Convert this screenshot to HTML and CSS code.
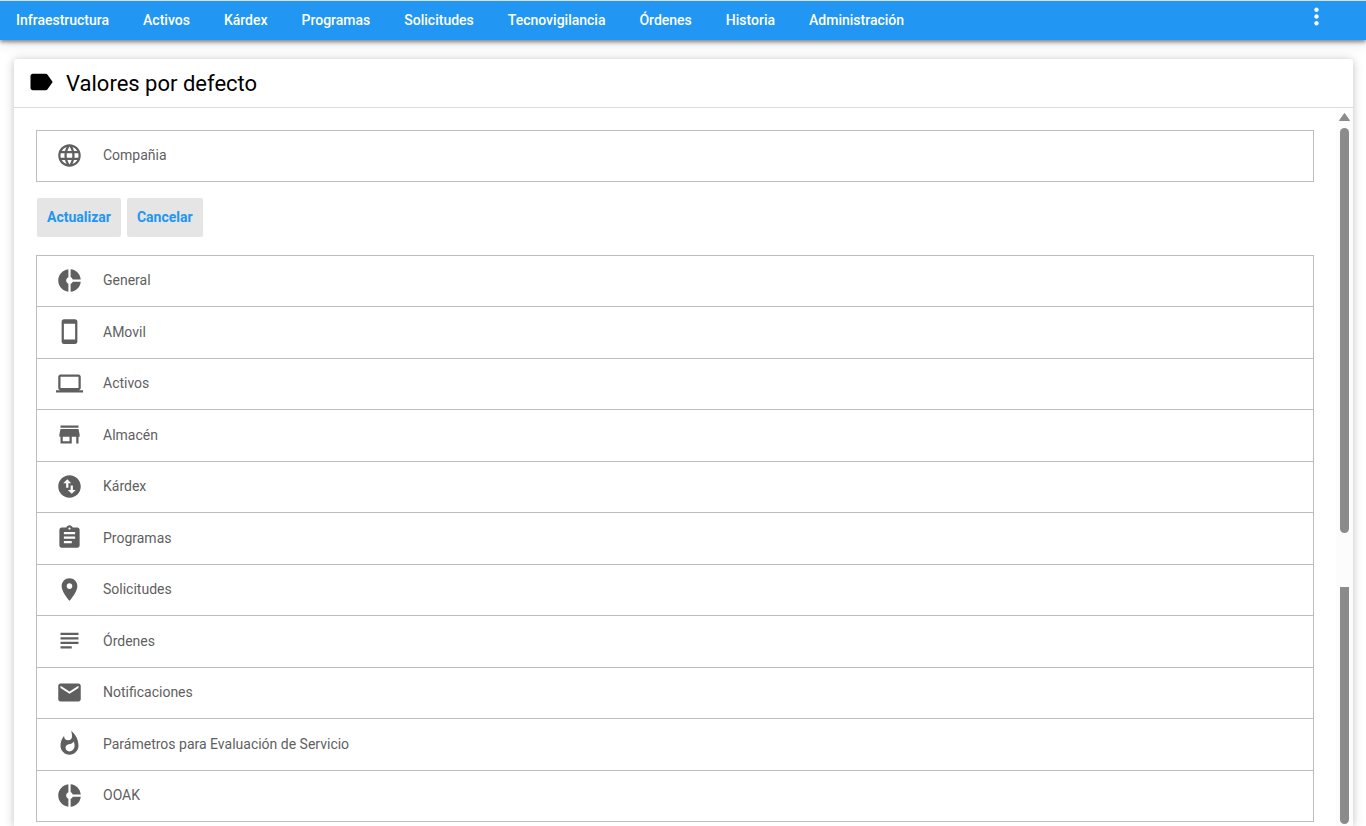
FILE: index.html
```html
<!DOCTYPE html>
<html lang="es">
<head>
  <meta charset="UTF-8" />
  <meta name="viewport" content="width=device-width, initial-scale=1" />
  <title>Valores por defecto</title>
  <link rel="stylesheet" href="styles.css">
</head>
<body>
  <header class="topbar">
    <nav class="menu">
      <a href="#">Infraestructura</a>
      <a href="#">Activos</a>
      <a href="#">Kárdex</a>
      <a href="#">Programas</a>
      <a href="#">Solicitudes</a>
      <a href="#">Tecnovigilancia</a>
      <a href="#">Órdenes</a>
      <a href="#">Historia</a>
      <a href="#">Administración</a>
    </nav>
    <button class="more" type="button" aria-label="Más opciones">
      <svg class="icon" viewBox="0 0 24 24"><path d="M12 8c1.1 0 2-.9 2-2s-.9-2-2-2-2 .9-2 2 .9 2 2 2zm0 2c-1.100 0-2 .9-2 2s.9 2 2 2 2-.9 2-2-.9-2-2-2zm0 6c-1.100 0-2 .9-2 2s.9 2 2 2 2-.9 2-2-.9-2-2-2z"/></svg>
    </button>
  </header>

  <main class="card">
    <div class="card-header">
      <svg class="icon" viewBox="0 0 24 24"><path d="M17.630 5.840C17.270 5.330 16.670 5 16 5L5 5.010C3.900 5.010 3 5.900 3 7v10c0 1.100.9 1.990 2 1.990L16 19c.67 0 1.270-.33 1.630-.84L22 12l-4.370-6.160z"/></svg>
      <h1>Valores por defecto</h1>
    </div>

    <div class="card-body">
      <div class="content">
        <!-- Company -->
        <ul class="panels">
          <li>
            <button class="panel" type="button">
              <svg class="icon" viewBox="0 0 24 24"><path d="M11.990 2C6.470 2 2 6.480 2 12s4.470 10 9.990 10C17.520 22 22 17.520 22 12S17.520 2 11.990 2zm6.930 6h-2.950c-.32-1.250-.78-2.450-1.380-3.560 1.840.63 3.370 1.910 4.330 3.560zM12 4.040c.83 1.200 1.480 2.530 1.910 3.960h-3.820c.43-1.430 1.080-2.760 1.910-3.960zM4.260 14C4.100 13.360 4 12.690 4 12s.1-1.360.26-2h3.380c-.08.66-.14 1.320-.14 2s.06 1.340.14 2H4.260zm.82 2h2.950c.32 1.250.78 2.450 1.380 3.560-1.840-.63-3.370-1.900-4.330-3.560zm2.950-8H5.080c.96-1.660 2.490-2.930 4.330-3.560C8.810 5.550 8.350 6.750 8.030 8zM12 19.960c-.83-1.200-1.480-2.530-1.910-3.960h3.820c-.43 1.430-1.080 2.760-1.910 3.960zM14.340 14H9.660c-.09-.66-.16-1.320-.16-2s.07-1.350.16-2h4.680c.09.65.16 1.320.16 2s-.07 1.340-.16 2zm.25 5.560c.6-1.110 1.060-2.310 1.380-3.560h2.950c-.96 1.650-2.490 2.930-4.330 3.560zM16.360 14c.08-.66.14-1.320.14-2s-.06-1.340-.14-2h3.380c.16.64.26 1.310.26 2s-.1 1.360-.26 2h-3.380z"/></svg>
              Compañia
            </button>
          </li>
        </ul>

        <div class="actions">
          <button class="btn" type="button">Actualizar</button>
          <button class="btn" type="button">Cancelar</button>
        </div>

        <!-- Modules -->
        <ul class="panels">
          <li>
            <button class="panel" type="button">
              <svg class="icon" viewBox="0 0 24 24"><path d="M11 9.160V2c-5 .5-9 4.790-9 10s4 9.500 9 10v-7.160c-1-.41-2-1.520-2-2.840s1-2.430 2-2.840zM14.860 11H22c-.48-4.750-4-8.530-9-9v7.160c1 .3 1.520.98 1.860 1.840zM13 14.840V22c5-.47 8.520-4.250 9-9h-7.140c-.34.86-.86 1.540-1.860 1.840z"/></svg>
              General
            </button>
          </li>
          <li>
            <button class="panel" type="button">
              <svg class="icon" viewBox="0 0 24 24"><path d="M17 1.010L7 1c-1.100 0-2 .9-2 2v18c0 1.100.9 2 2 2h10c1.100 0 2-.9 2-2V3c0-1.100-.9-1.990-2-1.990zM17 19H7V5h10v14z"/></svg>
              AMovil
            </button>
          </li>
          <li>
            <button class="panel" type="button">
              <svg class="icon" viewBox="0 0 24 24"><path d="M20 18c1.100 0 1.990-.9 1.990-2L22 6c0-1.100-.9-2-2-2H4c-1.100 0-2 .9-2 2v10c0 1.100.9 2 2 2H0v2h24v-2h-4zM4 6h16v10H4V6z"/></svg>
              Activos
            </button>
          </li>
          <li>
            <button class="panel" type="button">
              <svg class="icon" viewBox="0 0 24 24"><path d="M20 4H4v2h16V4zm1 10v-2l-1-5H4l-1 5v2h1v6h10v-6h4v6h2v-6h1zm-9 4H6v-4h6v4z"/></svg>
              Almacén
            </button>
          </li>
          <li>
            <button class="panel" type="button">
              <svg class="icon" viewBox="0 0 24 24"><path d="M12 2C6.480 2 2 6.480 2 12s4.480 10 10 10 10-4.480 10-10S17.520 2 12 2zM6.500 9L10 5.500 13.500 9H11v4H9V9H6.500zm11 6L14 18.500 10.500 15H13v-4h2v4h2.500z"/></svg>
              Kárdex
            </button>
          </li>
          <li>
            <button class="panel" type="button">
              <svg class="icon" viewBox="0 0 24 24"><path d="M19 3h-4.180C14.400 1.840 13.300 1 12 1c-1.300 0-2.400.84-2.820 2H5c-1.100 0-2 .9-2 2v14c0 1.100.9 2 2 2h14c1.100 0 2-.9 2-2V5c0-1.100-.9-2-2-2zm-7 0c.55 0 1 .45 1 1s-.45 1-1 1-1-.45-1-1 .45-1 1-1zm2 14H7v-2h7v2zm3-4H7v-2h10v2zm0-4H7V7h10v2z"/></svg>
              Programas
            </button>
          </li>
          <li>
            <button class="panel" type="button">
              <svg class="icon" viewBox="0 0 24 24"><path d="M12 2C8.130 2 5 5.130 5 9c0 5.250 7 13 7 13s7-7.750 7-13c0-3.870-3.130-7-7-7zm0 9.500c-1.380 0-2.500-1.120-2.500-2.500s1.120-2.500 2.500-2.500 2.500 1.120 2.500 2.500-1.120 2.500-2.500 2.500z"/></svg>
              Solicitudes
            </button>
          </li>
          <li>
            <button class="panel" type="button">
              <svg class="icon" viewBox="0 0 24 24"><path d="M14 17H4v2h10v-2zm6-8H4v2h16V9zM4 15h16v-2H4v2zM4 5v2h16V5H4z"/></svg>
              Órdenes
            </button>
          </li>
          <li>
            <button class="panel" type="button">
              <svg class="icon" viewBox="0 0 24 24"><path d="M20 4H4c-1.100 0-1.990.9-1.990 2L2 18c0 1.100.9 2 2 2h16c1.100 0 2-.9 2-2V6c0-1.100-.9-2-2-2zm0 4l-8 5-8-5V6l8 5 8-5v2z"/></svg>
              Notificaciones
            </button>
          </li>
          <li>
            <button class="panel" type="button">
              <svg class="icon" viewBox="0 0 24 24"><path d="M13.500.67s.74 2.650.74 4.800c0 2.060-1.350 3.730-3.410 3.730-2.070 0-3.630-1.670-3.630-3.730l.03-.36C5.210 7.510 4 10.620 4 14c0 4.420 3.580 8 8 8s8-3.580 8-8C20 8.610 17.410 3.800 13.500.67zM11.710 19c-1.780 0-3.220-1.400-3.220-3.140 0-1.620 1.050-2.760 2.810-3.120 1.770-.36 3.600-1.210 4.620-2.580.39 1.290.59 2.650.59 4.040 0 2.650-2.150 4.800-4.800 4.800z"/></svg>
              Parámetros para Evaluación de Servicio
            </button>
          </li>
          <li>
            <button class="panel" type="button">
              <svg class="icon" viewBox="0 0 24 24"><path d="M11 9.160V2c-5 .5-9 4.790-9 10s4 9.500 9 10v-7.160c-1-.41-2-1.520-2-2.840s1-2.430 2-2.840zM14.860 11H22c-.48-4.750-4-8.530-9-9v7.160c1 .3 1.520.98 1.860 1.840zM13 14.840V22c5-.47 8.520-4.250 9-9h-7.140c-.34.86-.86 1.540-1.860 1.840z"/></svg>
              OOAK
            </button>
          </li>
        </ul>
      </div>

      <!-- Scrollbar -->
      <div class="scrollbar" aria-hidden="true">
        <svg class="scroll-arrow" viewBox="0 0 11 8"><path d="M5.500 0.500L10.500 7.500H0.500z" stroke-linejoin="round"/></svg>
        <div class="thumb"></div>
        <div class="thumb thumb-end"></div>
      </div>
    </div>
  </main>
</body>
</html>
```
FILE: styles.css
```css
* {
  box-sizing: border-box;
}
body {
  display: flex;
  flex-direction: column;
  min-height: 100vh;
  margin: 0;
  font-family: Roboto, "Liberation Sans", sans-serif;
  font-size: 14px;
  background-color: #fff;
  color: #000;
}
button {
  border: none;
  background: none;
  font-family: inherit;
  font-size: 14px;
  cursor: pointer;
}
.icon {
  flex: none;
  width: 27px;
  height: 27px;
  fill: currentColor;
}

/* Top menu */
.topbar {
  display: flex;
  justify-content: space-between;
  align-items: flex-start;
  height: 40px;
  padding: 0 36px 0 16px;
  border-top: 1px solid #dcdcdc;
  background-color: #2196f3;
  box-shadow: 0 2px 4px rgba(0, 0, 0, 0.45), 0 4px 12px rgba(0, 0, 0, 0.1);
}
.menu {
  display: flex;
  gap: 34px;
}
.menu a {
  color: #fff;
  font-weight: 500;
  line-height: 38px;
  text-decoration: none;
}
.more {
  display: flex;
  padding: 2px 0;
  color: #fff;
}

/* Card */
.card {
  flex: 1;
  display: flex;
  flex-direction: column;
  margin: 19px 13px 0 14px;
  border-radius: 3px 3px 0 0;
  background-color: #fff;
  box-shadow: 0 1px 10px rgba(0, 0, 0, 0.25);
}
.card-header {
  display: flex;
  align-items: center;
  gap: 11px;
  height: 49px;
  padding: 0 13px;
  border-bottom: 1px solid #dcdcdc;
}
.card-header .icon {
  width: 28px;
  height: 28px;
  margin-bottom: 2px;
}
h1 {
  margin: 0;
  font-size: 22px;
  font-weight: 400;
  line-height: 28px;
  padding-top: 2px;
}
.card-body {
  flex: 1;
  display: flex;
}
.content {
  flex: 1;
  padding: 22px 22px 4px;
}

.panels {
  margin: 0;
  padding: 0;
  list-style: none;
  border: 1px solid #bdbdbd;
}
.panels li + li {
  border-top: 1px solid #bdbdbd;
}
.panel {
  display: flex;
  align-items: center;
  gap: 20px;
  width: 100%;
  height: 50px;
  padding: 0 19px 2px;
  color: #5f5f5f;
  text-align: left;
}
.panels li:nth-child(even) .panel {
  height: 51px;
}

.actions {
  display: flex;
  gap: 6px;
  padding: 16px 1px 18px;
}
.btn {
  height: 39px;
  padding: 0 10px 2px;
  border-radius: 2px;
  background-color: #e5e5e5;
  color: #2196f3;
  font-weight: 700;
}

/* Scrollbar */
.scrollbar {
  display: flex;
  flex-direction: column;
  align-items: center;
  width: 17px;
  padding: 5px 0 2px;
  background-color: #fcfcfc;
}
.scroll-arrow {
  width: 11px;
  height: 8px;
  margin-bottom: 7px;
  fill: #8b8b8b;
  stroke: #8b8b8b;
}
.thumb {
  flex: 12;
  width: 9px;
  border-radius: 5px;
  background-color: #8b8b8b;
}
.thumb-end {
  flex: 7;
  margin-top: 54px;
  border-radius: 0 0 5px 5px;
}
```
